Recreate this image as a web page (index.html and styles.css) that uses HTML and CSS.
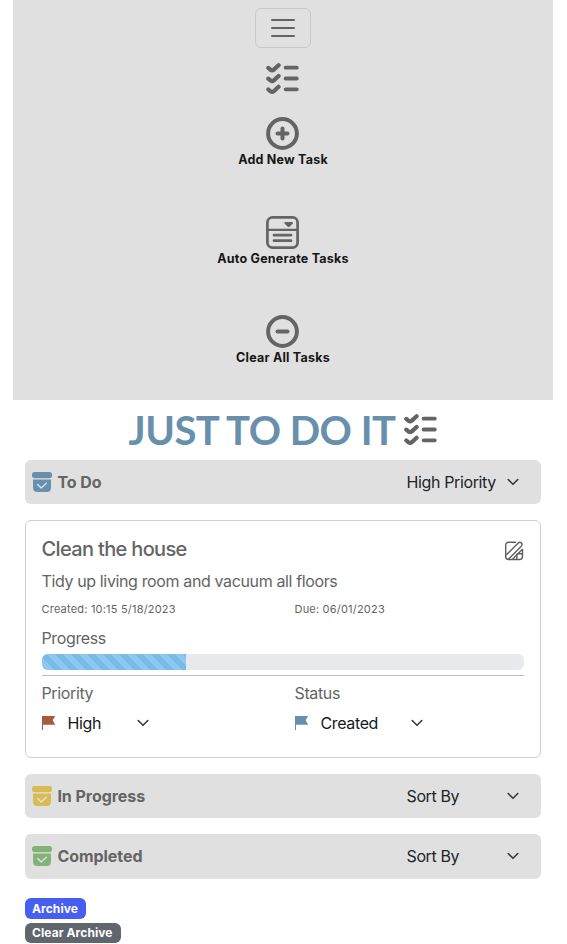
FILE: index.html
```html
<!DOCTYPE html>
<html lang="en">
<head>
<meta charset="utf-8">
<title>Just To Do It</title>
<link rel="stylesheet" href="styles.css">
</head>
<body>
<svg class="defs" aria-hidden="true">
  <symbol id="checklist" viewBox="0 0 34 34">
    <g fill="none" stroke="currentColor" stroke-width="4.2" stroke-linecap="round" stroke-linejoin="round">
      <path d="M2.3 5.9 4.6 7.8Q6.2 9 7.8 7.6L12.6 3.2M2.3 16.7 4.6 18.6Q6.2 19.8 7.8 18.4L12.6 14M2.3 27.5 4.6 29.4Q6.2 30.6 7.8 29.2L12.6 24.8"/>
      <path stroke-width="3.8" d="M19.6 5.7H30.8M19.6 16.5H30.8M19.6 27.3H30.8"/>
    </g>
  </symbol>
  <symbol id="archive" viewBox="0 0 20 20">
    <rect width="20" height="6.3" rx="2.8" fill="currentColor"/>
    <path fill="currentColor" d="M1 7.4H19V15.5Q19 20 14.5 20H5.5Q1 20 1 15.5Z"/>
    <path d="M5.7 12.5 9.2 15.9 14.3 11.2" fill="none" stroke="#e0e0e0" stroke-width="1.4" stroke-linecap="round" stroke-linejoin="round"/>
  </symbol>
  <symbol id="flag" viewBox="0 0 14 14">
    <path fill="currentColor" d="M0 0H13.2L10.7 4.2 13.2 8.7H1V14H0Z"/>
  </symbol>
  <symbol id="chevron" viewBox="0 0 12 8">
    <path d="M1.2 1.5 6 6.3 10.8 1.5" fill="none" stroke="#343a40" stroke-width="1.6" stroke-linecap="round" stroke-linejoin="round"/>
  </symbol>
</svg>
<nav class="navbar">
  <button class="toggler" aria-label="Menu">
    <svg width="24" height="20" viewBox="0 0 24 20"><path d="M1 2H23M1 10H23M1 18H23" stroke="#646464" stroke-width="2" stroke-linecap="round"/></svg>
  </button>
  <svg class="brand"><use href="#checklist"/></svg>
  <a class="nav-item">
    <svg viewBox="0 0 34 34"><g fill="none" stroke="currentColor" stroke-width="4" stroke-linecap="round"><circle cx="16.5" cy="16.5" r="14.4"/><path d="M11.5 16.5H21.5M16.5 11.5V21.5"/></g></svg>
    <span class="label">Add New Task</span>
  </a>
  <a class="nav-item">
    <svg viewBox="0 0 34 34"><g fill="none" stroke="currentColor" stroke-width="2.7" stroke-linecap="round"><rect x="1.4" y="1.4" width="30.2" height="30.2" rx="5"/><path d="M1.5 13.9H31.5" stroke-width="2.2"/><path d="M8 19.2H25M8 24.7H25"/></g><path d="M19.2 6H26.2Q27.7 6.5 26.7 7.8L23.6 10.7Q22.7 11.4 21.8 10.7L18.7 7.8Q17.7 6.5 19.2 6Z" fill="currentColor"/></svg>
    <span class="label">Auto Generate Tasks</span>
  </a>
  <a class="nav-item">
    <svg viewBox="0 0 34 34"><g fill="none" stroke="currentColor" stroke-width="4" stroke-linecap="round"><circle cx="16.5" cy="16.5" r="14.4"/><path d="M11.5 16.5H21.5"/></g></svg>
    <span class="label">Clear All Tasks</span>
  </a>
</nav>
<header class="title"><h1>JUST TO DO IT</h1><svg><use href="#checklist"/></svg></header>
<main>
  <section class="bar todo"><svg class="box"><use href="#archive"/></svg><h2>To Do</h2><div class="select"><span>High Priority</span><svg class="chev"><use href="#chevron"/></svg></div></section>
  <article class="card">
    <div class="card-head">
      <h3>Clean the house</h3>
      <svg class="edit" viewBox="0 0 20 20"><g fill="none" stroke="#5f5f5f" stroke-width="1.4" stroke-linejoin="round"><path d="M12 1.2H5Q1.7 1.2 1.7 4.5V15.4Q1.7 18.5 4.8 18.5H15.4Q18.5 18.5 18.5 15.4V8"/><path d="M12.8 18.4V14.4Q12.8 12.8 14.4 12.8H18.4"/><path d="M2.1 14.1 14.3 1.9Q15.8.6 17.3 1.9T17.3 5.2L4.6 17.9M8.7 18 18.4 8.3"/></g></svg>
    </div>
    <p class="desc">Tidy up living room and vacuum all floors</p>
    <div class="cols dates"><span>Created: 10:15 5/18/2023</span><span>Due: 06/01/2023</span></div>
    <p class="progress-label">Progress</p>
    <div class="progress"><div class="fill"></div></div>
    <hr>
    <div class="cols labels"><span>Priority</span><span>Status</span></div>
    <div class="cols values">
      <div class="value high"><svg class="flag"><use href="#flag"/></svg><span>High</span><svg class="chev"><use href="#chevron"/></svg></div>
      <div class="value state"><svg class="flag"><use href="#flag"/></svg><span>Created</span><svg class="chev"><use href="#chevron"/></svg></div>
    </div>
  </article>
  <section class="bar doing"><svg class="box"><use href="#archive"/></svg><h2>In Progress</h2><div class="select"><span>Sort By</span><svg class="chev"><use href="#chevron"/></svg></div></section>
  <section class="bar done"><svg class="box"><use href="#archive"/></svg><h2>Completed</h2><div class="select"><span>Sort By</span><svg class="chev"><use href="#chevron"/></svg></div></section>
  <div class="badges"><span class="badge blue">Archive</span><span class="badge grey">Clear Archive</span></div>
</main>
</body>
</html>
```
FILE: styles.css
```css
* { box-sizing: border-box; }
body { margin: 0 14px 0 13px; background: #fff; color: #646464; font: 16px/24px Inter, "Liberation Sans", sans-serif; letter-spacing: -0.37px; }
h1, h2, h3, p { margin: 0; }
svg { display: block; flex: none; }
.defs { display: none; }

.navbar { height: 400px; padding-top: 8px; background: #e0e0e0; display: flex; flex-direction: column; align-items: center; overflow: hidden; }
.toggler { flex: none; width: 56px; height: 40px; padding: 0; border: 1px solid #c8c8c8; border-radius: 6px; background: none; display: flex; align-items: center; justify-content: center; }
.brand { width: 34px; height: 34px; margin-top: 14px; }
.nav-item { flex: none; display: flex; flex-direction: column; align-items: center; height: 99px; }
.brand + .nav-item { margin-top: 21px; }
.nav-item svg { width: 34px; height: 34px; }
.label { font-size: 12.5px; line-height: 18px; font-weight: 700; color: #161616; letter-spacing: 0.22px; }

.title { height: 60px; display: flex; justify-content: center; align-items: center; gap: 8px; }
.title h1 { font: 700 40px/62px Lato, sans-serif; color: #688fac; letter-spacing: -0.5px; }
.title svg { width: 34px; height: 34px; }

main { padding: 0 12px; }
.bar { height: 44px; padding: 0 22px 0 7px; display: flex; align-items: center; border-radius: 6px; background: #e0e0e0; }
.box { width: 20px; height: 20px; }
.bar h2 { margin-left: 5.4px; font-size: 16px; line-height: 24px; font-weight: 700; letter-spacing: -0.05px; }
.select { width: 113px; margin-left: auto; display: flex; align-items: center; justify-content: space-between; color: #20242a; }
.select span { margin-left: 0.5px; }
.chev { width: 12px; height: 8px; }
.todo .box { color: #688fac; }
.doing .box { color: #d9bb54; }
.done .box { color: #82b276; }
.doing { margin-bottom: 16px; }
.done { height: 45px; padding-bottom: 1px; }

.card { height: 238px; margin: 16px 0; padding: 15px 16px 0 15.5px; border: 1px solid #cfcfcf; border-radius: 6px; }
.card-head { display: flex; justify-content: space-between; height: 32px; }
.card h3 { font-size: 20px; line-height: 26px; font-weight: 500; letter-spacing: -0.65px; }
.edit { width: 20px; height: 20px; margin-top: 5px; }
.desc { height: 29px; line-height: 26px; }
.cols { display: grid; grid-template-columns: 253px 1fr; }
.dates { height: 29px; font-size: 11px; line-height: 24px; letter-spacing: 0.2px; }
.progress-label { height: 28px; line-height: 25px; }
.progress { height: 16px; border-radius: 6px; overflow: hidden; background: #e8e9ed; }
.fill { width: 30%; height: 16px; background: linear-gradient(45deg, #90c7ed 25%, #76bbea 25% 50%, #90c7ed 50% 75%, #76bbea 75%) 4px 0 / 16px 16px; }
hr { height: 1px; margin: 5px 0; border: 0; background: #bdbdbd; }
.labels { height: 30px; }
.value { display: flex; align-items: center; color: #17191d; }
.flag { width: 14px; height: 14px; }
.value span { margin-left: 12px; }
.high .flag { color: #a45a43; }
.state .flag { color: #688fac; }
.value .chev { margin-left: auto; }
.high { width: 107.5px; }
.state { width: 128.5px; }

.badges { margin-top: 19px; display: flex; flex-direction: column; align-items: flex-start; gap: 4px; }
.badge { height: 21px; line-height: 21px; padding-left: 7px; border-radius: 6px; font-size: 12px; font-weight: 700; color: #fff; letter-spacing: 0.08px; }
.blue { width: 61px; background: #475ef1; }
.grey { width: 96px; height: 20px; line-height: 20px; background: #61656d; }
```
